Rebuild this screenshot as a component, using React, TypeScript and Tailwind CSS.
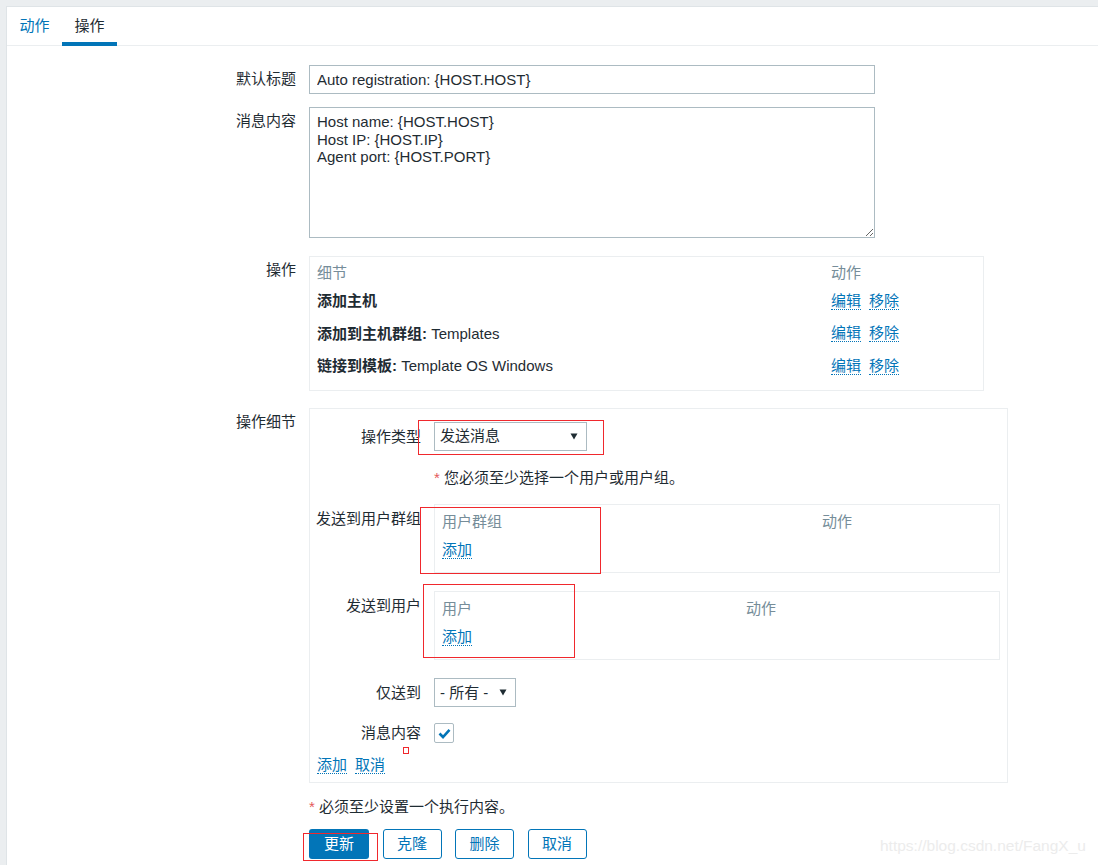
import React from "react";

const Lnk = ({ children }: { children: React.ReactNode }) => (
  <span className="inline-block text-[#0275b8] border-b border-dotted border-[#0275b8] leading-[17px]">
    {children}
  </span>
);

const Arrow = () => (
  <svg width="8" height="7" viewBox="0 0 8 7" className="shrink-0">
    <polygon points="0.5,0.5 7.5,0.5 4,6.5" fill="#1f2c33" />
  </svg>
);

const RedBox = ({ l, t, w, h }: { l: number; t: number; w: number; h: number }) => (
  <div
    className="absolute border border-[#f0282d] pointer-events-none"
    style={{ left: l, top: t, width: w, height: h }}
  />
);

export default function App() {
  return (
    <div className="relative w-[1098px] h-[865px] overflow-hidden bg-[#ebeef0] pl-[6px] pt-[6px] font-['Liberation_Sans','Noto_Sans_CJK_SC',sans-serif] text-[15px] leading-[17.5px] text-[#1f2c33]">
      <div className="bg-white border-l border-t border-[#dfe4e7] w-full h-full">
        {/* tabs */}
        <div className="flex items-start h-[39px] border-b border-[#ebeef0]">
          <div className="h-[39px] -mb-px px-[12.5px] pt-[10px] text-[#0275b8]">动作</div>
          <div className="h-[39px] -mb-px px-[12.5px] pt-[10px] border-b-4 border-[#0275b8]">操作</div>
        </div>

        <div className="pt-[19px]">
          {/* 默认标题 */}
          <div className="flex">
            <div className="w-[289px] shrink-0 text-right pt-[5px]">默认标题</div>
            <input
              readOnly
              value="Auto registration: {HOST.HOST}"
              className="ml-[13px] w-[566px] h-[29px] border border-[#acbbc2] px-[7px] outline-none text-[#1f2c33]"
            />
          </div>

          {/* 消息内容 */}
          <div className="flex mt-[13px]">
            <div className="w-[289px] shrink-0 text-right pt-[5px]">消息内容</div>
            <textarea
              readOnly
              value={"Host name: {HOST.HOST}\nHost IP: {HOST.IP}\nAgent port: {HOST.PORT}"}
              className="ml-[13px] w-[566px] h-[131px] border border-[#acbbc2] px-[7px] pt-[5px] pb-[4px] outline-none text-[#1f2c33]"
            />
          </div>

          {/* 操作 */}
          <div className="flex mt-[18px]">
            <div className="w-[289px] shrink-0 text-right pt-[5px]">操作</div>
            <div className="ml-[13px] w-[675px] border border-[#ebeef0] pl-[7px] pt-[7px] pb-[7.5px]">
              <div className="flex pb-[3px] text-[#768d99]">
                <div className="w-[514px]">细节</div>
                <div>动作</div>
              </div>
              {[
                [<b key="a">添加主机</b>],
                [<b key="a">添加到主机群组:</b>, " Templates"],
                [<b key="a">链接到模板:</b>, " Template OS Windows"],
              ].map((r, i) => (
                <div key={i} className="flex items-center h-[32.5px]">
                  <div className="w-[514px]">{r}</div>
                  <div className="flex gap-[8px]">
                    <Lnk>编辑</Lnk>
                    <Lnk>移除</Lnk>
                  </div>
                </div>
              ))}
            </div>
          </div>

          {/* 操作细节 */}
          <div className="flex mt-[17px]">
            <div className="w-[289px] shrink-0 text-right pt-[5px]">操作细节</div>
            <div className="ml-[13px] w-[699px] border border-[#ebeef0] pt-[13px] pb-[8px] pr-[7px]">
              {/* 操作类型 */}
              <div className="flex">
                <div className="w-[111px] shrink-0 text-right pt-[6px]">操作类型</div>
                <div className="ml-[13px] w-[153px] h-[29px] border border-[#acbbc2] flex items-center justify-between pl-[5px] pr-[8px]">
                  <span>发送消息</span>
                  <Arrow />
                </div>
              </div>

              <div className="ml-[124px] mt-[18px]">
                <span className="text-[#e45959]">*</span> 您必须至少选择一个用户或用户组。
              </div>

              {/* 发送到用户群组 */}
              <div className="flex mt-[18px]">
                <div className="w-[111px] shrink-0 text-right pt-[6px] whitespace-nowrap">发送到用户群组</div>
                <div className="ml-[13px] flex-1 border border-[#ebeef0] pl-[7px] pt-[8px] pb-[6px]">
                  <div className="flex pb-[3px] text-[#768d99]">
                    <div className="w-[380px]">用户群组</div>
                    <div>动作</div>
                  </div>
                  <div className="flex items-center h-[32.5px]">
                    <Lnk>添加</Lnk>
                  </div>
                </div>
              </div>

              {/* 发送到用户 */}
              <div className="flex mt-[18px]">
                <div className="w-[111px] shrink-0 text-right pt-[6px]">发送到用户</div>
                <div className="ml-[13px] flex-1 border border-[#ebeef0] pl-[7px] pt-[8px] pb-[6px]">
                  <div className="flex pb-[3px] text-[#768d99]">
                    <div className="w-[304px]">用户</div>
                    <div>动作</div>
                  </div>
                  <div className="flex items-center h-[32.5px]">
                    <Lnk>添加</Lnk>
                  </div>
                </div>
              </div>

              {/* 仅送到 */}
              <div className="flex mt-[18px]">
                <div className="w-[111px] shrink-0 text-right pt-[6px]">仅送到</div>
                <div className="ml-[13px] w-[82px] h-[29px] border border-[#acbbc2] flex items-center justify-between pl-[5px] pr-[8px]">
                  <span>- 所有 -</span>
                  <Arrow />
                </div>
              </div>

              {/* 消息内容 checkbox */}
              <div className="flex items-center mt-[16px]">
                <div className="w-[111px] shrink-0 text-right">消息内容</div>
                <div className="ml-[13px] w-[20px] h-[20px] border border-[#acbbc2] rounded-[2px] flex items-center justify-center">
                  <svg width="13" height="11" viewBox="0 0 13 11">
                    <path d="M1.5 5.5 L5 9 L11.5 1.8" fill="none" stroke="#0275b8" strokeWidth="2.6" />
                  </svg>
                </div>
              </div>

              <div className="flex gap-[8px] mt-[13px] pl-[7px]">
                <Lnk>添加</Lnk>
                <Lnk>取消</Lnk>
              </div>
            </div>
          </div>

          <div className="ml-[302px] mt-[15px]">
            <span className="text-[#e45959]">*</span> 必须至少设置一个执行内容。
          </div>

          <div className="ml-[302px] mt-[13px] flex gap-[13.5px]">
            <div className="w-[60px] h-[30px] rounded-[3px] bg-[#0275b8] text-white flex items-center justify-center">更新</div>
            <div className="w-[59px] h-[30px] rounded-[3px] border border-[#0275b8] text-[#0275b8] flex items-center justify-center">克隆</div>
            <div className="w-[59px] h-[30px] rounded-[3px] border border-[#0275b8] text-[#0275b8] flex items-center justify-center">删除</div>
            <div className="w-[59px] h-[30px] rounded-[3px] border border-[#0275b8] text-[#0275b8] flex items-center justify-center">取消</div>
          </div>
        </div>
      </div>

      {/* annotation overlays */}
      <RedBox l={418} t={420} w={186} h={35} />
      <RedBox l={420} t={507} w={181} h={67} />
      <RedBox l={423} t={584} w={152} h={74} />
      <RedBox l={403} t={747} w={6} h={7} />
      <RedBox l={303} t={833} w={75} h={28} />

      <div className="absolute left-[880px] top-[837px] text-[15.5px] leading-[18px] text-[#ececec] whitespace-nowrap">
        https://blog.csdn.net/FangX_u
      </div>
    </div>
  );
}
